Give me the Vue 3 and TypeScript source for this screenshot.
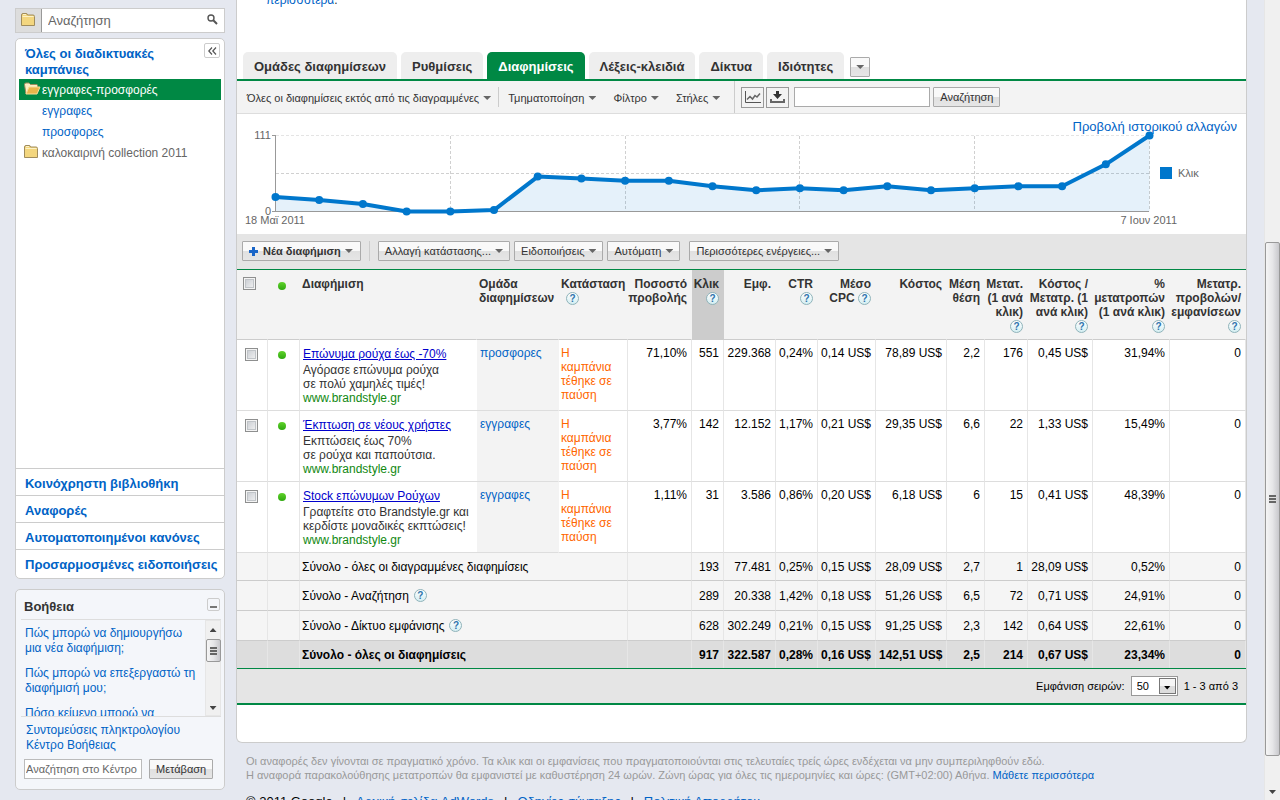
<script setup lang="ts">
import { ref } from 'vue'

interface Ad {
  title: string
  lines: string[]
  group: string
  values: string[]
}

interface Total {
  label: string
  help: boolean
  grand: boolean
  values: string[]
}

interface Column {
  lines: string[]
  help: 'none' | 'below' | 'inline'
  align: 'left' | 'right'
  sorted?: boolean
}

const tabs = ['Ομάδες διαφημίσεων', 'Ρυθμίσεις', 'Διαφημίσεις', 'Λέξεις-κλειδιά', 'Δίκτυα', 'Ιδιότητες']
const activeTab = ref('Διαφημίσεις')

const library = ['Κοινόχρηστη βιβλιοθήκη', 'Αναφορές', 'Αυτοματοποιημένοι κανόνες', 'Προσαρμοσμένες ειδοποιήσεις']
const questions = [
  'Πώς μπορώ να δημιουργήσω μια νέα διαφήμιση;',
  'Πώς μπορώ να επεξεργαστώ τη διαφήμισή μου;',
  'Πόσο κείμενο μπορώ να',
]

const columns: Column[] = [
  { lines: ['Διαφήμιση'], help: 'none', align: 'left' },
  { lines: ['Ομάδα', 'διαφημίσεων'], help: 'none', align: 'left' },
  { lines: ['Κατάσταση'], help: 'below', align: 'left' },
  { lines: ['Ποσοστό', 'προβολής'], help: 'none', align: 'right' },
  { lines: ['Κλικ'], help: 'below', align: 'right', sorted: true },
  { lines: ['Εμφ.'], help: 'none', align: 'right' },
  { lines: ['CTR'], help: 'below', align: 'right' },
  { lines: ['Μέσο', 'CPC'], help: 'inline', align: 'right' },
  { lines: ['Κόστος'], help: 'none', align: 'right' },
  { lines: ['Μέση', 'θέση'], help: 'none', align: 'right' },
  { lines: ['Μετατ.', '(1 ανά', 'κλικ)'], help: 'below', align: 'right' },
  { lines: ['Κόστος /', 'Μετατρ. (1', 'ανά κλικ)'], help: 'below', align: 'right' },
  { lines: ['%', 'μετατροπών', '(1 ανά κλικ)'], help: 'below', align: 'right' },
  { lines: ['Μετατρ.', 'προβολών/', 'εμφανίσεων'], help: 'below', align: 'right' },
]

const widths = [31, 32, 177, 82, 69, 64, 32, 52, 42, 58, 71, 38, 43, 65, 77, 76]

const ads: Ad[] = [
  {
    title: 'Επώνυμα ρούχα έως -70%',
    lines: ['Αγόρασε επώνυμα ρούχα', 'σε πολύ χαμηλές τιμές!'],
    group: 'προσφορες',
    values: ['71,10%', '551', '229.368', '0,24%', '0,14 US$', '78,89 US$', '2,2', '176', '0,45 US$', '31,94%', '0'],
  },
  {
    title: 'Έκπτωση σε νέους χρήστες',
    lines: ['Εκπτώσεις έως 70%', 'σε ρούχα και παπούτσια.'],
    group: 'εγγραφες',
    values: ['3,77%', '142', '12.152', '1,17%', '0,21 US$', '29,35 US$', '6,6', '22', '1,33 US$', '15,49%', '0'],
  },
  {
    title: 'Stock επώνυμων Ρούχων',
    lines: ['Γραφτείτε στο Brandstyle.gr και', 'κερδίστε μοναδικές εκπτώσεις!'],
    group: 'εγγραφες',
    values: ['1,11%', '31', '3.586', '0,86%', '0,20 US$', '6,18 US$', '6', '15', '0,41 US$', '48,39%', '0'],
  },
]

const totals: Total[] = [
  { label: 'Σύνολο - όλες οι διαγραμμένες διαφημίσεις', help: false, grand: false, values: ['193', '77.481', '0,25%', '0,15 US$', '28,09 US$', '2,7', '1', '28,09 US$', '0,52%', '0'] },
  { label: 'Σύνολο - Αναζήτηση', help: true, grand: false, values: ['289', '20.338', '1,42%', '0,18 US$', '51,26 US$', '6,5', '72', '0,71 US$', '24,91%', '0'] },
  { label: 'Σύνολο - Δίκτυο εμφάνισης', help: true, grand: false, values: ['628', '302.249', '0,21%', '0,15 US$', '91,25 US$', '2,3', '142', '0,64 US$', '22,61%', '0'] },
  { label: 'Σύνολο - όλες οι διαφημίσεις', help: false, grand: true, values: ['917', '322.587', '0,28%', '0,16 US$', '142,51 US$', '2,5', '214', '0,67 US$', '23,34%', '0'] },
]

const clicks = [21, 17, 11, 0, 0, 2, 51, 48, 45, 45, 37, 31, 34, 31, 37, 31, 34, 37, 37, 69, 111]
const points = clicks.map((value, i) => ({
  x: Math.round((38.5 + i * 43.7) * 10) / 10,
  y: Math.round((97.5 - (value / 111) * 76) * 10) / 10,
}))
const linePoints = points.map((p) => `${p.x},${p.y}`).join(' ')
const areaPoints = `38.5,97.5 ${linePoints} 912.5,97.5`
</script>

<template>
  <div class="page">
    <aside class="sidebar">
      <form class="find" @submit.prevent>
        <button type="button" class="find-folder" aria-label="Φάκελος">
          <svg width="14" height="13" viewBox="0 0 14 13"><path d="M.5 12.5V2q0-1.500 1.500-1.500h3Q6.500.5 6.500 2h5.500q1.500 0 1.500 1.500v9z" fill="#f3d67f" stroke="#a08c5c" /><path d="M1.500 3.500h11M2 1.500h3" stroke="#fdf2c6" /></svg>
        </button>
        <input type="text" placeholder="Αναζήτηση" aria-label="Αναζήτηση" />
        <button type="button" class="find-go" aria-label="Εύρεση">
          <svg width="11" height="11" viewBox="0 0 11 11"><circle cx="4" cy="4" r="3" fill="none" stroke="#555" stroke-width="1.4" /><path d="M6.3 6.3l3.7 3.7" stroke="#555" stroke-width="2" /></svg>
        </button>
      </form>

      <nav class="panel tree-panel">
        <div class="tree">
          <div class="tree-head">
            <a href="#">Όλες οι διαδικτυακές καμπάνιες</a>
            <button type="button" class="square" aria-label="Σύμπτυξη">
              <svg width="9" height="8" viewBox="0 0 9 8"><path d="M4 .5L.8 4 4 7.5M8 .5L4.8 4 8 7.5" fill="none" stroke="#555" stroke-width="1.2" /></svg>
            </button>
          </div>
          <a href="#" class="node selected">
            <svg width="17" height="13" viewBox="0 0 17 13"><path d="M2 12L.5 2.500q0-1.500 1.500-1.500h3l1.500 1.500h6q1 0 1 1V5" fill="#fbeec4" stroke="#a08c5c" /><path d="M2 12L5 5h11l-3 7z" fill="#e9b54a" stroke="#f6dc98" /></svg>
            <span>εγγραφες-προσφορές</span>
          </a>
          <a href="#" class="node child">εγγραφες</a>
          <a href="#" class="node child">προσφορες</a>
          <a href="#" class="node paused">
            <svg width="14" height="13" viewBox="0 0 14 13"><path d="M.5 12.5V2q0-1.500 1.500-1.500h3Q6.500.5 6.500 2h5.500q1.500 0 1.500 1.500v9z" fill="#f3d67f" stroke="#a08c5c" /><path d="M1.500 3.500h11M2 1.500h3" stroke="#fdf2c6" /></svg>
            <span>καλοκαιρινή collection 2011</span>
          </a>
        </div>
        <a v-for="item in library" :key="item" href="#" class="library">{{ item }}</a>
      </nav>

      <section class="panel help">
        <header class="help-head">
          <h2>Βοήθεια</h2>
          <button type="button" class="square minimise" aria-label="Ελαχιστοποίηση"><span></span></button>
        </header>
        <div class="help-list">
          <div class="help-links">
            <a v-for="q in questions" :key="q" href="#">{{ q }}</a>
          </div>
          <div class="bar" aria-hidden="true">
            <span class="arrow up"></span>
            <span class="thumb small"><i></i></span>
            <span class="arrow down push"></span>
          </div>
        </div>
        <div class="help-foot">
          <a href="#">Συντομεύσεις πληκτρολογίου</a>
          <a href="#">Κέντρο Βοήθειας</a>
          <form class="help-search" @submit.prevent>
            <input type="text" placeholder="Αναζήτηση στο Κέντρο Βοήθειας" aria-label="Αναζήτηση στο Κέντρο Βοήθειας" />
            <button type="submit" class="btn">Μετάβαση</button>
          </form>
        </div>
      </section>
    </aside>

    <main class="main">
      <div class="card">
        <p class="more"><a href="#">περισσότερα</a>.</p>
        <nav class="tabs">
          <button v-for="tab in tabs" :key="tab" type="button" class="tab" :class="{ active: tab === activeTab }" @click="activeTab = tab">{{ tab }}</button>
          <button type="button" class="btn tab-more" aria-label="Περισσότερες καρτέλες"><span class="caret"></span></button>
        </nav>

        <form class="filters" @submit.prevent>
          <button type="button" class="drop">Όλες οι διαφημίσεις εκτός από τις διαγραμμένες<span class="caret"></span></button>
          <span class="sep"></span>
          <button type="button" class="drop">Τμηματοποίηση<span class="caret"></span></button>
          <button type="button" class="drop">Φίλτρο<span class="caret"></span></button>
          <button type="button" class="drop">Στήλες<span class="caret"></span></button>
          <span class="sep tall"></span>
          <span class="icons">
            <button type="button" class="icon-btn" aria-label="Γράφημα">
              <svg width="17" height="13" viewBox="0 0 17 13"><path d="M1.5 0v11.5H17" fill="none" stroke="#555" /><path d="M3 8.5l3-3 2.5 2.5L11 4.5l2 1.5 3-3.5" fill="none" stroke="#666" stroke-width="1.5" /></svg>
            </button>
            <button type="button" class="icon-btn" aria-label="Λήψη">
              <svg width="15" height="13" viewBox="0 0 15 13"><path d="M6 0h3v3h3L7.5 8 3 3h3z" fill="#333" /><path d="M1 8v3h13V8" fill="none" stroke="#666" stroke-width="2" /></svg>
            </button>
          </span>
          <input type="text" class="filter-input" aria-label="Αναζήτηση διαφημίσεων" />
          <button type="submit" class="btn">Αναζήτηση</button>
        </form>

        <section class="chart">
          <a href="#" class="history">Προβολή ιστορικού αλλαγών</a>
          <svg viewBox="0 0 1009 120" role="img" aria-label="Κλικ">
            <g stroke="#d0d0d0" stroke-dasharray="3 2">
              <path d="M39 21.5H912" stroke="#e4e4e4" />
              <path d="M39 59.5H912" />
              <path d="M213.5 22V97M388.5 22V97M562.5 22V97M737.5 22V97M912.5 22V97" />
            </g>
            <polygon :points="areaPoints" fill="#0077cc" fill-opacity=".1" />
            <path d="M38.5 21V98M35 21.5h4M35 97.5H912" fill="none" stroke="#999" />
            <polyline :points="linePoints" fill="none" stroke="#0077cc" stroke-width="4" stroke-linejoin="round" />
            <circle v-for="p in points" :key="p.x" :cx="p.x" :cy="p.y" r="4" fill="#0077cc" />
            <rect x="923" y="53" width="12" height="12" fill="#0077cc" />
            <g class="labels">
              <text x="34" y="25" text-anchor="end">111</text>
              <text x="34" y="101" text-anchor="end">0</text>
              <text x="8" y="110">18 Μαϊ 2011</text>
              <text x="940" y="110" text-anchor="end">7 Ιουν 2011</text>
              <text x="941" y="63">Κλικ</text>
            </g>
          </svg>
        </section>

        <div class="actions">
          <button type="button" class="btn strong">
            <svg width="9" height="9" viewBox="0 0 9 9"><path d="M4.5 0v9M0 4.5h9" stroke="#1a66c8" stroke-width="3" /></svg>
            Νέα διαφήμιση<span class="caret"></span>
          </button>
          <span class="sep"></span>
          <button type="button" class="btn">Αλλαγή κατάστασης...<span class="caret"></span></button>
          <button type="button" class="btn">Ειδοποιήσεις<span class="caret"></span></button>
          <button type="button" class="btn">Αυτόματη<span class="caret"></span></button>
          <button type="button" class="btn apart">Περισσότερες ενέργειες...<span class="caret"></span></button>
        </div>

        <table>
          <colgroup>
            <col v-for="(w, i) in widths" :key="i" :style="{ width: w + 'px' }" />
          </colgroup>
          <thead>
            <tr>
              <th scope="col" class="check"><input type="checkbox" aria-label="Επιλογή όλων" /></th>
              <th scope="col" class="state"><span class="dot"></span></th>
              <th v-for="(c, i) in columns" :key="i" scope="col" :class="[c.align, { sorted: c.sorted }]">
                <span v-for="(line, n) in c.lines" :key="n" class="line">{{ line }}<template v-if="c.help === 'inline' && n === c.lines.length - 1">&nbsp;<span class="q">?</span></template></span>
                <span v-if="c.help === 'below'" class="line under"><span class="q">?</span></span>
              </th>
            </tr>
          </thead>
          <tbody>
            <tr v-for="ad in ads" :key="ad.title" class="ad">
              <td class="check"><input type="checkbox" :aria-label="ad.title" /></td>
              <td class="state"><span class="dot"></span></td>
              <td class="copy">
                <a href="#">{{ ad.title }}</a>
                <span v-for="line in ad.lines" :key="line" class="line">{{ line }}</span>
                <span class="line url">www.brandstyle.gr</span>
              </td>
              <td class="group"><a href="#">{{ ad.group }}</a></td>
              <td class="status">Η καμπάνια τέθηκε σε παύση</td>
              <td v-for="(v, i) in ad.values" :key="i" class="right">{{ v }}</td>
            </tr>
          </tbody>
          <tfoot>
            <tr v-for="t in totals" :key="t.label" :class="{ grand: t.grand, tall: t.help }">
              <td></td>
              <td></td>
              <th scope="row" colspan="3">{{ t.label }}<span v-if="t.help" class="q">?</span></th>
              <td></td>
              <td v-for="(v, i) in t.values" :key="i" class="right">{{ v }}</td>
            </tr>
          </tfoot>
        </table>

        <div class="pager">
          <label for="rows">Εμφάνιση σειρών:</label>
          <span class="select">
            <select id="rows"><option>50</option><option>100</option></select>
            <span class="select-arrow" aria-hidden="true"></span>
          </span>
          <span>1 - 3 από 3</span>
        </div>
      </div>

      <p class="note">
        Οι αναφορές δεν γίνονται σε πραγματικό χρόνο. Τα κλικ και οι εμφανίσεις που πραγματοποιούνται στις τελευταίες τρείς ώρες ενδέχεται να μην συμπεριληφθούν εδώ.<br />
        Η αναφορά παρακολούθησης μετατροπών θα εμφανιστεί με καθυστέρηση 24 ωρών. Ζώνη ώρας για όλες τις ημερομηνίες και ώρες: (GMT+02:00) Αθήνα. <a href="#">Μάθετε περισσότερα</a>
      </p>
      <footer class="legal">
        <span>© 2011 Google</span><span>|</span><a href="#">Αρχική σελίδα AdWords</a><span>|</span><a href="#">Οδηγίες σύνταξης</a><span>|</span><a href="#">Πολιτική Απορρήτου</a>
      </footer>
    </main>

    <div class="bar page-bar" aria-hidden="true">
      <span class="track-top"></span>
      <span class="thumb"><i></i></span>
      <span class="arrow down"></span>
    </div>
  </div>
</template>

<style>
body {
  margin: 0;
  background: #e5e8f0;
}
</style>

<style scoped>
.page {
  display: flex;
  height: 100vh;
  overflow: hidden;
  background: #e5e8f0;
  color: #333;
  font: 12px/14px "Liberation Sans", Arial, sans-serif;
}
.page * {
  box-sizing: border-box;
}
a {
  color: #0063c6;
  text-decoration: none;
}
button,
input,
select {
  margin: 0;
  font-family: inherit;
  color: inherit;
}
button {
  cursor: pointer;
}
input::placeholder {
  color: #666;
  opacity: 1;
}

/* sidebar */
.sidebar {
  flex: none;
  width: 210px;
  margin: 8px 11px 0 15px;
}
.find {
  display: flex;
  align-items: stretch;
  height: 25px;
  border: 1px solid #ccc;
  background: #fff;
}
.find-folder {
  width: 26px;
  padding: 0 1px 2px 0;
  border: 0;
  border-right: 1px solid #999;
  background: #ddd;
  line-height: 0;
}
.find input {
  flex: 1;
  min-width: 0;
  padding: 0 6px;
  border: 0;
  background: none;
  font-size: 13px;
  outline: 0;
}
.find-go {
  width: 24px;
  padding: 0 0 2px;
  border: 0;
  background: none;
  line-height: 0;
}
.panel {
  border: 1px solid #ccc;
  border-radius: 5px;
}
.tree-panel {
  margin-top: 5px;
  background: #fff;
}
.tree {
  min-height: 429px;
  padding: 4px 3px;
}
.tree-head {
  display: flex;
  justify-content: space-between;
  align-items: flex-start;
  height: 36px;
  padding: 0 1px 0 6px;
}
.tree-head a {
  width: 150px;
  padding-top: 3px;
  font-size: 13px;
  font-weight: bold;
  line-height: 16px;
}
.square {
  display: flex;
  align-items: center;
  justify-content: center;
  width: 16px;
  height: 15px;
  padding: 0;
  border: 1px solid #ccc;
  border-radius: 2px;
  background: #fff;
}
.node {
  display: flex;
  align-items: center;
  height: 21px;
  padding-left: 5px;
}
.node svg {
  flex: none;
  margin: 0 4px 2px 0;
}
.node.selected {
  background: #008844;
  color: #fff;
}
.node.selected svg {
  margin-right: 1px;
}
.node.child {
  padding-left: 23px;
}
.node.paused {
  color: #666;
}
.library {
  display: block;
  height: 27px;
  padding-left: 9px;
  border-top: 1px solid #ccc;
  font-size: 13px;
  font-weight: bold;
  line-height: 29px;
  white-space: nowrap;
}
.library:last-child {
  height: 29px;
}
.help {
  margin-top: 10px;
  padding: 0 3px 10px 5px;
  background: #f4f6fa;
}
.help-head {
  display: flex;
  justify-content: space-between;
  align-items: center;
  height: 30px;
  padding: 4px 1px 0 3px;
  border-bottom: 1px solid #ddd;
}
.help-head h2 {
  margin: 0;
  font-size: 13px;
  line-height: 16px;
}
.minimise {
  width: 13px;
  height: 13px;
  background: none;
  margin-bottom: 4px;
}
.minimise span {
  width: 7px;
  height: 2px;
  margin-top: 4px;
  background: #777;
}
.help-list {
  display: flex;
  height: 97px;
  overflow: hidden;
  border-bottom: 1px solid #ddd;
}
.help-links {
  flex: 1;
  padding: 6px 8px 0 4px;
}
.help-links a {
  display: block;
  margin-bottom: 10px;
  line-height: 15px;
}
.help-foot {
  padding: 6px 0 0 4px;
}
.help-foot > a {
  display: block;
  padding-left: 1px;
  line-height: 15px;
}
.help-search {
  display: flex;
  gap: 7px;
  margin: 6px 0 0 -1px;
}
.help-search input {
  width: 118px;
  height: 20px;
  padding: 0 1px;
  border: 1px solid #bbb;
  font-size: 11px;
}

/* scroll bars */
.bar {
  display: flex;
  flex: none;
  flex-direction: column;
  align-items: center;
  width: 16px;
  background: #f0f0f0;
  border: 1px solid #e6e6e6;
}
.thumb {
  display: flex;
  align-items: center;
  justify-content: center;
  width: 15px;
  border: 1px solid #999;
  border-radius: 2px;
  background: linear-gradient(90deg, #f5f5f5, #e6e6e8 50%, #c8c8cc);
}
.thumb i {
  width: 7px;
  height: 8px;
  background: repeating-linear-gradient(#666 0 2px, #e0e0e0 2px 3px);
}
.thumb.small {
  height: 23px;
}
.arrow {
  width: 7px;
  height: 4px;
  background: #444;
}
.arrow.up {
  margin: 7px 0;
  clip-path: polygon(50% 0, 100% 100%, 0 100%);
}
.arrow.down {
  margin: 5px 0;
  clip-path: polygon(0 0, 100% 0, 50% 100%);
}
.arrow.push {
  margin-top: auto;
}
.page-bar {
  border-width: 0 0 0 1px;
}
.page-bar .track-top {
  flex: 243;
}
.page-bar .thumb {
  flex: 513;
}
.page-bar .arrow {
  margin: 34px 0 6px;
}

/* main card */
.main {
  flex: 1;
  min-width: 0;
  margin-right: 17px;
}
.card {
  padding-bottom: 37px;
  border: 1px solid #ccc;
  border-top: 0;
  border-radius: 0 0 6px 6px;
  background: #fff;
}
.more {
  height: 52px;
  margin: 0;
  padding-left: 29px;
  font-size: 12px;
  line-height: 0;
}
.tabs {
  display: flex;
  gap: 4px;
  align-items: flex-end;
  padding-left: 6px;
  border-bottom: 2px solid #008844;
}
.tab {
  height: 27px;
  padding: 2px 11px 0;
  border: 0;
  border-radius: 5px 5px 0 0;
  background: #eee;
  font-size: 13px;
  font-weight: bold;
}
.tab.active {
  background: #008844;
  color: #fff;
}
.btn {
  display: inline-flex;
  align-items: center;
  justify-content: center;
  flex: none;
  height: 20px;
  padding: 0 6px;
  border: 1px solid #aaa;
  border-radius: 1px;
  background: linear-gradient(#f9f9f9 50%, #e0e0e0 50%, #e6e6e6);
  font-size: 11px;
  line-height: 14px;
  white-space: nowrap;
}
.btn.strong {
  padding: 0 7px 0 6px;
  font-weight: bold;
}
.btn.strong svg {
  margin-right: 5px;
}
.btn.tab-more {
  width: 20px;
  padding: 0;
  margin: 0 0 2px 2px;
}
.btn.tab-more .caret {
  margin: 0;
}
.caret {
  width: 8px;
  height: 4px;
  margin-left: 4px;
  background: #666;
  clip-path: polygon(0 0, 100% 0, 50% 100%);
}
.filters {
  display: flex;
  align-items: center;
  height: 33px;
  padding-left: 10px;
  border-bottom: 1px solid #ddd;
  background: #f3f3f3;
}
.drop {
  display: flex;
  align-items: center;
  padding: 2px 0 0;
  border: 0;
  background: none;
  font-size: 11px;
  line-height: 14px;
  white-space: nowrap;
}
.drop + .drop {
  margin-left: 17px;
}
.sep {
  width: 1px;
  height: 20px;
  margin: 0 9px;
  background: #ccc;
}
.filters .sep {
  margin-left: 7px;
}
.filters .sep.tall {
  align-self: stretch;
  height: auto;
  margin: 0 6px 0 14px;
}
.icons {
  display: flex;
  gap: 2px;
}
.icon-btn {
  display: flex;
  align-items: center;
  justify-content: center;
  width: 23px;
  height: 21px;
  padding: 0;
  border: 1px solid #999;
  background: #f3f3f3;
}
.filter-input {
  width: 136px;
  height: 20px;
  margin: 0 3px 0 5px;
  padding: 0 4px;
  border: 1px solid #aaa;
  background: #fff;
  font-size: 12px;
}

/* chart */
.chart {
  position: relative;
}
.chart svg {
  display: block;
  position: relative;
  width: 100%;
  pointer-events: none;
}
.history {
  position: absolute;
  top: 6px;
  right: 9px;
  font-size: 13px;
}
.labels {
  fill: #666;
  font-size: 11px;
}

/* table tools */
.actions {
  display: flex;
  align-items: center;
  gap: 4px;
  height: 35px;
  padding: 0 0 1px 5px;
  background: #e5e5e5;
}
.actions .sep {
  margin: 0 4px;
}
.actions .apart {
  margin-left: 5px;
}

table {
  width: 100%;
  table-layout: fixed;
  border-collapse: separate;
  border-spacing: 0;
  border-top: 1px solid #008844;
  border-bottom: 1px solid #008844;
}
th,
td {
  padding: 0 4px 0 3px;
  border-right: 1px solid #e6e6e6;
  border-bottom: 1px solid #ccc;
  text-align: left;
  vertical-align: top;
  white-space: nowrap;
}
thead th {
  height: 70px;
  padding-top: 7px;
  padding-left: 2px;
  border-right-color: transparent;
  background: #f3f3f3;
  background-clip: border-box;
}
thead th.sorted {
  background: #ccc;
}
thead .right .line {
  display: flex;
  justify-content: flex-end;
}
.left .under {
  padding-left: 5px;
}
.right {
  text-align: right;
}
.line {
  display: block;
  height: 14px;
}
.check {
  padding: 8px 0 0 8px;
}
thead .check {
  padding-top: 7px;
  padding-left: 6px;
}
.check input {
  display: block;
  appearance: none;
  width: 13px;
  height: 13px;
  border: 1px solid #8e8f8f;
  background: linear-gradient(135deg, #c4c8ce, #f6f6f6);
  box-shadow: inset 0 0 0 1px #f4f4f4, inset 0 0 0 2px #c0c4c8;
}
.state {
  padding: 11px 0 0 10px;
}
thead .state {
  padding-top: 12px;
  padding-left: 10px;
}
.dot {
  display: block;
  width: 8px;
  height: 8px;
  border-radius: 50%;
  background: linear-gradient(#5fd22a, #2fa810);
}
.q {
  display: inline-flex;
  align-items: center;
  justify-content: center;
  width: 13px;
  height: 13px;
  border: 1px solid #8fb3ba;
  border-radius: 50%;
  background: linear-gradient(#fff, #d4eef2);
  color: #2f74ad;
  font-size: 10px;
  font-weight: bold;
  line-height: 10px;
  vertical-align: top;
}
thead .q {
  margin-top: 1px;
}
.ad td {
  height: 71px;
  border-bottom-color: #ddd;
  color: #000;
}
.ad td:not(.check, .state) {
  padding-top: 6px;
}
.ad .copy {
  border-right: 0;
  color: #333;
}
.copy a {
  display: block;
  color: #0000cc;
  line-height: 17px;
  text-decoration: underline;
}
.copy .url {
  color: #118811;
}
.ad .group {
  background: #f3f3f3;
  border-right-color: #f3f3f3;
}
.ad .status {
  padding-left: 2px;
  color: #ff6600;
  white-space: normal;
}
tfoot td,
tfoot th {
  height: 28px;
  padding-top: 1px;
  background: #f5f5f5;
  color: #000;
  font-weight: normal;
  vertical-align: middle;
}
tfoot th {
  padding-left: 2px;
}
tfoot .tall td,
tfoot .tall th {
  height: 30px;
}
tfoot .grand td,
tfoot .grand th {
  height: 27px;
  border-bottom: 0;
  background: #ddd;
  font-weight: bold;
}
tfoot .q {
  margin-left: 5px;
}

.pager {
  display: flex;
  align-items: center;
  justify-content: flex-end;
  gap: 6px;
  height: 36px;
  padding-right: 8px;
  border-bottom: 2px solid #008844;
  background: #e5e5e5;
  color: #000;
  font-size: 11px;
}
.select {
  position: relative;
  display: flex;
}
select {
  appearance: none;
  width: 47px;
  height: 20px;
  padding: 0 5px;
  border: 1px solid #999;
  border-radius: 0;
  background: #fff;
  font-size: 11px;
}
.select-arrow {
  position: absolute;
  top: 2px;
  right: 2px;
  display: flex;
  align-items: center;
  justify-content: center;
  width: 17px;
  height: 16px;
  border: 1px solid #777;
  background: linear-gradient(#f6f6f6 50%, #ddd 50%);
  pointer-events: none;
}
.select-arrow::after {
  content: "";
  width: 7px;
  height: 4px;
  margin-top: 3px;
  background: #000;
  clip-path: polygon(0 0, 100% 0, 50% 100%);
}
.note {
  margin: 11px 0 0 10px;
  color: #999;
  font-size: 11px;
  line-height: 14px;
}
.legal {
  display: flex;
  gap: 10px;
  margin: 12px 0 0 10px;
  color: #000;
  font-size: 13px;
  line-height: 16px;
  white-space: nowrap;
}
</style>
